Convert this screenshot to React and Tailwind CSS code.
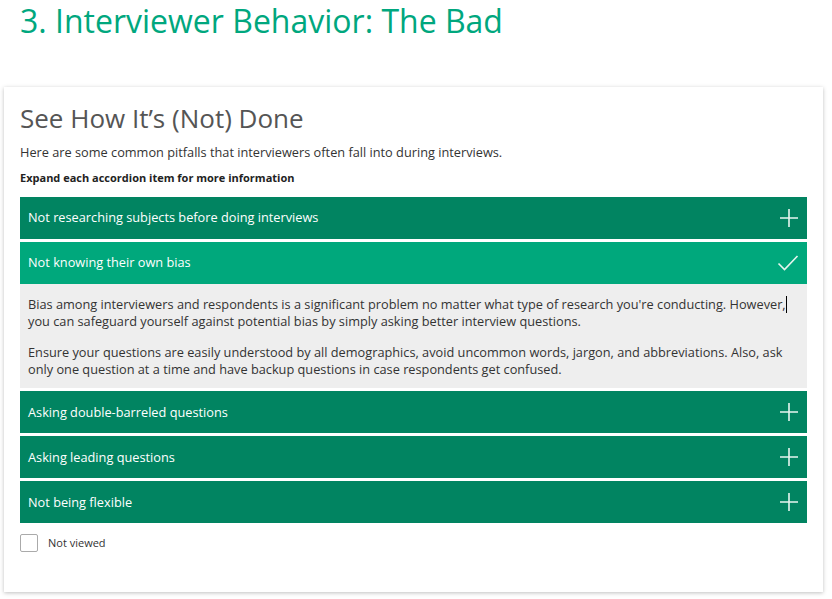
import { useState } from "react";

const items = [
  { title: "Not researching subjects before doing interviews" },
  {
    title: "Not knowing their own bias",
    body: [
      [
        "Bias among interviewers and respondents is a significant problem no matter what type of research you're conducting. However,",
        "you can safeguard yourself against potential bias by simply asking better interview questions.",
      ],
      [
        "Ensure your questions are easily understood by all demographics, avoid uncommon words, jargon, and abbreviations. Also, ask",
        "only one question at a time and have backup questions in case respondents get confused.",
      ],
    ],
  },
  { title: "Asking double-barreled questions" },
  { title: "Asking leading questions" },
  { title: "Not being flexible" },
];

function PlusIcon() {
  return (
    <svg width="20" height="20" viewBox="0 0 20 20" fill="none">
      <path d="M10 1v18M1 10h18" stroke="#e6f5ef" strokeWidth="1.6" />
    </svg>
  );
}

function CheckIcon() {
  return (
    <svg width="22" height="18" viewBox="0 0 22 18" fill="none">
      <path d="M1.5 9.5l6 6L20.5 2" stroke="#e6f5ef" strokeWidth="1.6" />
    </svg>
  );
}

export default function App() {
  const [open, setOpen] = useState(1);

  return (
    <div className="bg-white min-h-[599px] font-['Open_Sans',sans-serif] pt-[3px]">
      <h1 className="pl-5 text-[32px] leading-[36px] text-[#00a77e] font-normal">
        3. Interviewer Behavior: The Bad
      </h1>

      <div className="ml-[4px] mt-[48px] w-[819px] bg-white shadow-[0_1px_4px_rgba(0,0,0,0.25)] px-4 pt-[14px] pb-[40px]">
        <h2 className="text-[26px] leading-[34px] text-[#555]">See How It’s (Not) Done</h2>
        <p className="mt-[8px] text-[12.75px] leading-[18px] text-[#333]">
          Here are some common pitfalls that interviewers often fall into during interviews.
        </p>
        <p className="mt-[9px] text-[11px] leading-[16px] font-bold text-[#222]">
          Expand each accordion item for more information
        </p>

        <div className="mt-[11px] flex flex-col">
          {items.map((it, i) => {
            const isOpen = open === i;
            return (
              <div key={i} className="mb-[3px]">
                <button
                  onClick={() => setOpen(isOpen ? -1 : i)}
                  className={`w-full h-[42px] flex items-center justify-between pl-2 pr-[8px] text-left text-[12.75px] text-white ${
                    isOpen ? "bg-[#00a87c]" : "bg-[#018461]"
                  }`}
                >
                  <span>{it.title}</span>
                  {isOpen ? <CheckIcon /> : <PlusIcon />}
                </button>
                {isOpen && it.body && (
                  <div className="bg-[#eeeeee] px-2 pt-[12px] pb-[11px] text-[12.75px] leading-[16.5px] text-[#333] whitespace-nowrap">
                    <p>
                      {it.body[0][0]}
                      <span className="inline-block w-px h-[17px] bg-black align-middle -mt-[3px]"></span>
                      <br />
                      {it.body[0][1]}
                    </p>
                    <p className="mt-[15px]">
                      {it.body[1][0]}
                      <br />
                      {it.body[1][1]}
                    </p>
                  </div>
                )}
              </div>
            );
          })}
        </div>

        <label className="mt-[8px] flex items-center gap-[10px]">
          <span className="w-[18px] h-[18px] border border-[#aaa] rounded-[2px] bg-white"></span>
          <span className="text-[11px] text-[#333]">Not viewed</span>
        </label>
      </div>
    </div>
  );
}
